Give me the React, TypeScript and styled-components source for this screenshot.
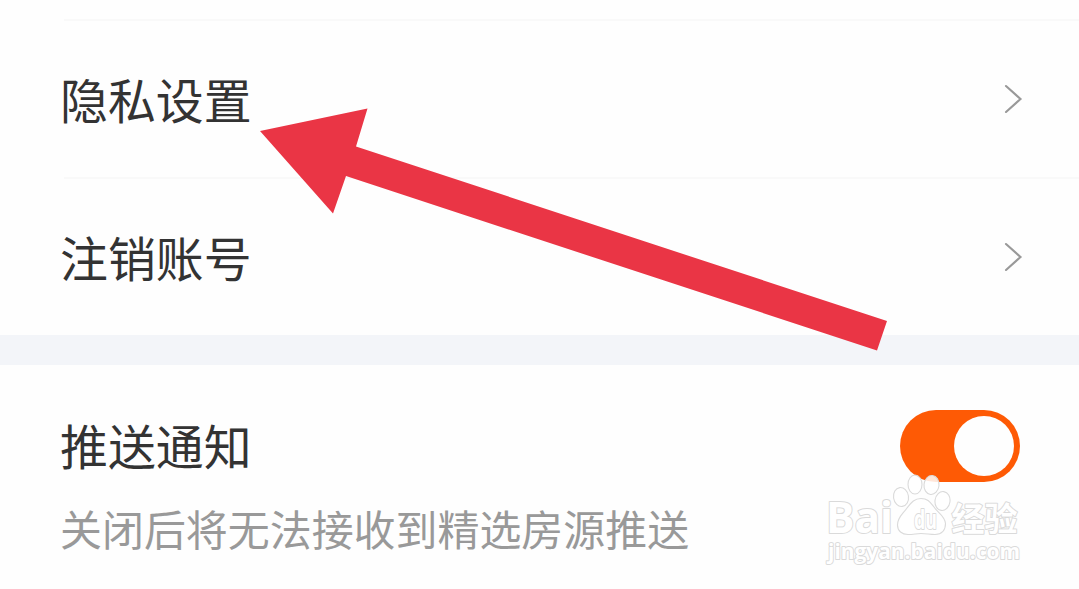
import React from "react";
import styled, { createGlobalStyle } from "styled-components";

const GlobalStyle = createGlobalStyle`
  * { box-sizing: border-box; }
  body { margin: 0; background: #fefefe; }
`;

const Screen = styled.main`
  position: relative;
  width: 1079px;
  height: 589px;
  overflow: hidden;
  display: flex;
  flex-direction: column;
  background: #fefefe;
  font-family: "Noto Sans CJK SC", sans-serif;
`;

const MenuList = styled.section`
  display: flex;
  flex-direction: column;
  height: 335px;
  padding: 19px 0 0 64px;
`;

const MenuRow = styled.div`
  display: flex;
  align-items: center;
  justify-content: space-between;
  height: 158px;
  padding: 0 56px 0 0;
  border-top: 2px solid #f9f9f9;
`;

const Title = styled.span<{ $inMenu?: boolean }>`
  font-size: 47.9px;
  line-height: 72px;
  padding-bottom: ${(p) => (p.$inMenu ? "2px" : "4px")};
  color: #333;
  margin-left: ${(p) => (p.$inMenu ? "-4px" : "0")};
`;

const Band = styled.div`
  height: 30px;
  background: #f3f5f9;
`;

const PushSection = styled.section`
  display: flex;
  flex-direction: column;
  flex: 1;
  padding: 45px 59px 0 60px;
`;

const PushHeader = styled.div`
  display: flex;
  align-items: center;
  justify-content: space-between;
  height: 72px;
`;

const Toggle = styled.button`
  display: flex;
  justify-content: flex-end;
  width: 120px;
  height: 72px;
  padding: 6px;
  border: 0;
  border-radius: 36px;
  background: #fe5a05;
`;

const Knob = styled.span`
  width: 60px;
  height: 60px;
  border-radius: 50%;
  background: #fefefe;
`;

const Hint = styled.p`
  margin: 15px 0 0;
  font-size: 41.95px;
  line-height: 62px;
  color: #999;
  white-space: nowrap;
`;

const Overlay = styled.svg`
  position: absolute;
  inset: 0;
  pointer-events: none;
`;

const MarkText = styled.text`
  font-family: "Open Sans", "Noto Sans CJK SC", sans-serif;
  font-weight: 700;
  fill: #fff;
  stroke: #dadada;
  stroke-width: 2px;
  stroke-linejoin: round;
  paint-order: stroke;
`;

const Chevron = () => (
  <svg width="20" height="30" viewBox="0 0 20 30" fill="none" stroke="#999" strokeWidth="2.1" strokeLinecap="round">
    <path d="M3 2L17.5 15L3 28" />
  </svg>
);

const Watermark = () => (
  <g>
    <g fill="#fff" fillOpacity="0.85" stroke="#dadada" strokeWidth="1.1">
      <ellipse cx="901" cy="497" rx="7.5" ry="9.5" transform="rotate(-8 901 497)" />
      <ellipse cx="915" cy="484.5" rx="7" ry="9.5" />
      <ellipse cx="931.5" cy="485" rx="7.5" ry="9.5" transform="rotate(6 931.5 485)" />
      <ellipse cx="942.5" cy="501" rx="7.5" ry="9.5" transform="rotate(8 942.5 501)" />
      <path d="M921 498.500C914 498.500 911 503 907 508C903 514 897.500 517 897.500 525C897.500 531 902 534.500 908 534.500C913 534.500 917 533.500 921 533.500C926 533.500 930 534.500 935 534.500C942 534.500 945.500 530 945.500 523.500C945 516 938 513 934 507C930 502 928 498.500 921 498.500Z" />
    </g>
    <MarkText x="826" y="533" fontSize="43" textLength="67" lengthAdjust="spacingAndGlyphs">
      Bai
    </MarkText>
    <MarkText x="914" y="528.5" fontSize="27" textLength="23" lengthAdjust="spacingAndGlyphs">
      du
    </MarkText>
    <MarkText x="951.5" y="531" fontSize="33.5" textLength="66" lengthAdjust="spacingAndGlyphs">
      经验
    </MarkText>
    <MarkText x="828" y="559" fontSize="22" textLength="192" lengthAdjust="spacingAndGlyphs">
      jingyan.baidu.com
    </MarkText>
  </g>
);

export default function App() {
  return (
    <Screen>
      <GlobalStyle />
      <MenuList>
        {["隐私设置", "注销账号"].map((label) => (
          <MenuRow key={label}>
            <Title $inMenu>{label}</Title>
            <Chevron />
          </MenuRow>
        ))}
      </MenuList>
      <Band />
      <PushSection>
        <PushHeader>
          <Title>推送通知</Title>
          <Toggle aria-label="推送通知">
            <Knob />
          </Toggle>
        </PushHeader>
        <Hint>关闭后将无法接收到精选房源推送</Hint>
      </PushSection>
      <Overlay width="1079" height="589" viewBox="0 0 1079 589">
        <path d="M260 131L367.500 108.500L356 146.500L887 321L877 350.500L346 176L333 213.500Z" fill="#ea3545" />
        <Watermark />
      </Overlay>
    </Screen>
  );
}
